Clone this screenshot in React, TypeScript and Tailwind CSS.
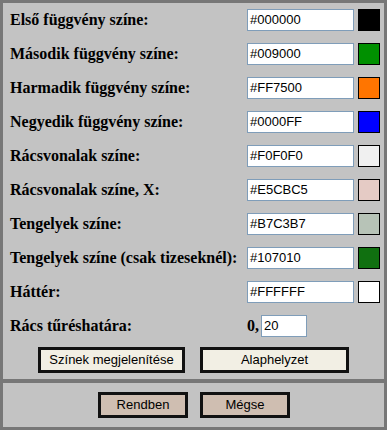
import React from "react";

const rows: { label: string; value: string; color: string }[] = [
  { label: "Első függvény színe:", value: "#000000", color: "#000000" },
  { label: "Második függvény színe:", value: "#009000", color: "#009000" },
  { label: "Harmadik függvény színe:", value: "#FF7500", color: "#FF7500" },
  { label: "Negyedik függvény színe:", value: "#0000FF", color: "#0000FF" },
  { label: "Rácsvonalak színe:", value: "#F0F0F0", color: "#F0F0F0" },
  { label: "Rácsvonalak színe, X:", value: "#E5CBC5", color: "#E5CBC5" },
  { label: "Tengelyek színe:", value: "#B7C3B7", color: "#B7C3B7" },
  { label: "Tengelyek színe (csak tizeseknél):", value: "#107010", color: "#107010" },
  { label: "Háttér:", value: "#FFFFFF", color: "#FFFFFF" },
];

const labelCls = "w-[237px] text-[16px] font-bold text-black font-['Liberation_Serif',serif]";
const inputCls =
  "h-[22px] bg-white border border-[#7f9db9] text-[13px] text-black flex items-center pl-[2px] font-['Liberation_Sans',sans-serif]";
const btnCls =
  "h-[26px] border-[3px] border-[#111111] text-[13px] text-black font-['Liberation_Sans',sans-serif]";

export default function App() {
  return (
    <div className="w-[387px] h-[430px] bg-[#777777] p-[3px] flex flex-col gap-[4px]">
      <div className="bg-[#c3c3c3] flex-1 flex flex-col">
        {rows.map((r) => (
          <div key={r.label} className="h-[34px] flex items-center pl-[7px]">
            <div className={labelCls}>{r.label}</div>
            <div className={`${inputCls} w-[107px]`}>{r.value}</div>
            <div
              className="ml-[4px] w-[22px] h-[22px] border border-black"
              style={{ backgroundColor: r.color }}
            />
          </div>
        ))}
        <div className="h-[34px] flex items-center pl-[7px]">
          <div className={labelCls}>Rács tűréshatára:</div>
          <div className="w-[14px] text-[16px] font-bold text-black font-['Liberation_Serif',serif]">0,</div>
          <div className={`${inputCls} w-[46px]`}>20</div>
        </div>
        <div className="flex gap-[15px] pl-[35px] pt-[4px]">
          <button className={`${btnCls} w-[147px] bg-[#f2efe4]`}>Színek megjelenítése</button>
          <button className={`${btnCls} w-[149px] bg-[#f2efe4]`}>Alaphelyzet</button>
        </div>
      </div>
      <div className="bg-[#c3c3c3] h-[44px] flex items-center justify-center gap-[12px] pl-[1px]">
        <button className={`${btnCls} w-[90px] bg-[#cfbeb1]`}>Rendben</button>
        <button className={`${btnCls} w-[90px] bg-[#cfbeb1]`}>Mégse</button>
      </div>
    </div>
  );
}
